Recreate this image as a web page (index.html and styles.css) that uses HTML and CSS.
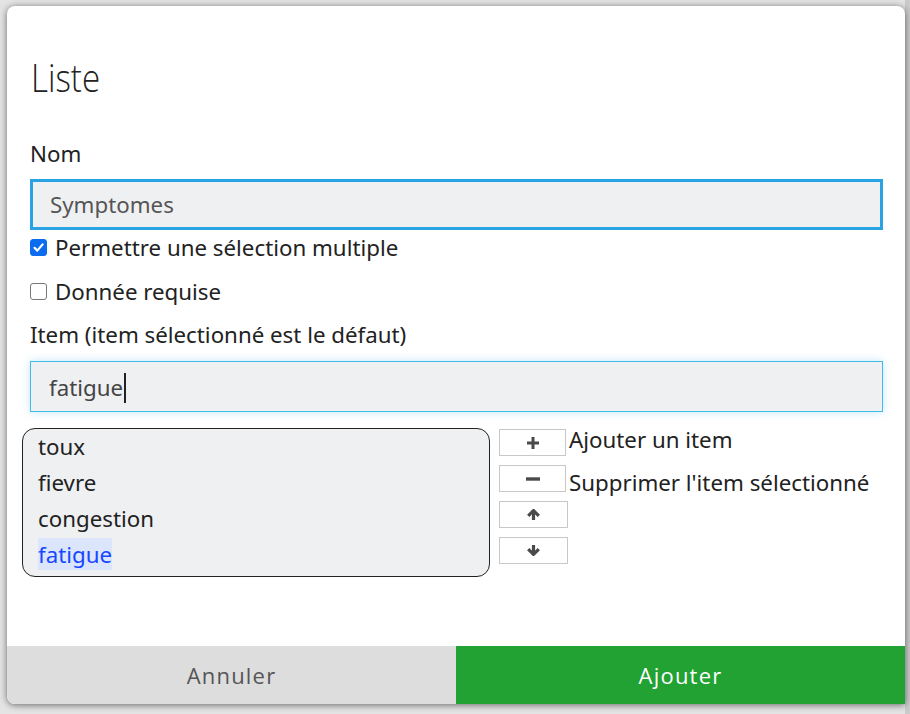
FILE: index.html
```html
<!DOCTYPE html>
<html lang="fr">
<head>
<meta charset="utf-8">
<title>Liste</title>
<link rel="stylesheet" href="styles.css">
</head>
<body>
<div class="modal">
  <div class="modal-body">
    <h1 class="title"><span class="title-text">Liste</span></h1>
    <div class="label">Nom</div>
    <div class="input input-focus">Symptomes</div>
    <div class="check check-first">
      <span class="box box-checked">
        <svg width="13" height="13" viewBox="0 0 13 13"><path d="M2.5 6.8 L5.3 9.6 L10.6 3.4" fill="none" stroke="#fff" stroke-width="2.2" stroke-linecap="round" stroke-linejoin="round"/></svg>
      </span>
      <span>Permettre une sélection multiple</span>
    </div>
    <div class="check">
      <span class="box"></span>
      <span>Donnée requise</span>
    </div>
    <div class="label label-item">Item (item sélectionné est le défaut)</div>
    <div class="input input-glow">fatigue<span class="caret"></span></div>
    <div class="items-row">
      <ul class="list">
        <li>toux</li>
        <li>fievre</li>
        <li>congestion</li>
        <li><span class="selected">fatigue</span></li>
      </ul>
      <div class="actions">
        <div class="action">
          <span class="btn">
            <svg width="12" height="12" viewBox="0 0 12 12"><path d="M6 0 V12 M0 6 H12" stroke="#4a4a4a" stroke-width="3"/></svg>
          </span>
          <span class="action-label label-add">Ajouter un item</span>
        </div>
        <div class="action">
          <span class="btn">
            <svg width="14" height="4" viewBox="0 0 14 4"><rect x="0" y="0.3" width="14" height="3.4" fill="#4a4a4a"/></svg>
          </span>
          <span class="action-label label-del">Supprimer l'item sélectionné</span>
        </div>
        <div class="action">
          <span class="btn btn-wide">
            <svg width="13" height="11" viewBox="0 0 13 11"><path d="M1.2 6.8 L6.5 1.6 L11.8 6.8" fill="none" stroke="#4a4a4a" stroke-width="3.2" stroke-linejoin="miter"/><path d="M6.5 2.5 V11" stroke="#4a4a4a" stroke-width="3.2"/></svg>
          </span>
        </div>
        <div class="action">
          <span class="btn btn-wide">
            <svg width="13" height="11" viewBox="0 0 13 11"><path d="M1.2 4.2 L6.5 9.4 L11.8 4.2" fill="none" stroke="#4a4a4a" stroke-width="3.2" stroke-linejoin="miter"/><path d="M6.5 8.5 V0" stroke="#4a4a4a" stroke-width="3.2"/></svg>
          </span>
        </div>
      </div>
    </div>
  </div>
  <div class="footer">
    <button class="footer-btn btn-cancel" type="button">Annuler</button>
    <button class="footer-btn btn-ok" type="button">Ajouter</button>
  </div>
</div>
</body>
</html>
```
FILE: styles.css
```css
html, body {
  margin: 0;
  padding: 0;
}
body {
  width: 910px;
  height: 714px;
  overflow: hidden;
  background: linear-gradient(90deg, #e4e4e4 905px, #cbcbcb 905px);
  font-family: "Noto Sans", "Open Sans", "Liberation Sans", sans-serif;
  color: #222;
}
.modal {
  margin: 6px 0 0 7px;
  width: 898px;
  height: 698px;
  background: #fff;
  border-radius: 8px 8px 0 8px;
  overflow: hidden;
  box-shadow: 0 1px 7px rgba(0, 0, 0, 0.55);
  display: flex;
  flex-direction: column;
}
.modal-body {
  flex: 1;
  padding: 48px 22px 0 23px;
}
.title {
  margin: 0;
  font-family: "Open Sans", "Noto Sans", sans-serif;
  font-weight: 300;
  font-size: 38px;
  line-height: 46px;
  color: #222;
  padding-left: 1px;
}
.title-text {
  display: inline-block;
  transform: scaleX(0.87);
  transform-origin: left center;
}
.label {
  margin-top: 36px;
  font-size: 22.3px;
  line-height: 36px;
}
.label-item {
  margin-top: 8px;
}
.input {
  box-sizing: border-box;
  height: 51px;
  background: #eff0f2;
  font-size: 22.3px;
  display: flex;
  align-items: center;
}
.input-focus {
  margin-top: 7px;
  border: 3px solid #29a3e3;
  padding-left: 17px;
  color: #555;
}
.input-glow {
  margin-top: 8px;
  border: 1px solid #3dbde9;
  padding: 2px 0 0 18px;
  color: #444;
  box-shadow: 0 0 8px rgba(80, 180, 240, 0.35);
}
.caret {
  display: inline-block;
  width: 2px;
  height: 30px;
  background: #222;
  margin-left: 1px;
}
.check {
  display: flex;
  align-items: center;
  height: 36px;
  margin-top: 8px;
  font-size: 22.3px;
  gap: 8px;
}
.check-first {
  margin-top: -1px;
}
.box {
  box-sizing: border-box;
  width: 17px;
  height: 17px;
  border: 1px solid #777;
  border-radius: 3px;
  background: #fff;
  display: flex;
  align-items: center;
  justify-content: center;
  margin-top: 1px;
}
.box-checked {
  background: #0b6cf0;
  border-color: #0b6cf0;
}
.items-row {
  display: flex;
  align-items: flex-start;
  margin: 16px 0 0 -8px;
  gap: 9px;
}
.list {
  box-sizing: border-box;
  width: 468px;
  height: 149px;
  margin: 0;
  padding: 0 0 0 15px;
  list-style: none;
  background: #eff0f2;
  border: 1px solid #222;
  border-radius: 13px;
  font-size: 22.3px;
  line-height: 36px;
}
.selected {
  background: #dbe5fb;
  color: #1747ff;
  padding: 1px 0 0;
}
.actions {
  display: flex;
  flex-direction: column;
  gap: 9px;
  padding-top: 1px;
}
.action {
  display: flex;
  height: 27px;
  gap: 3px;
}
.btn {
  box-sizing: border-box;
  width: 67px;
  height: 27px;
  border: 1px solid #c8c8c8;
  background: #fff;
  display: flex;
  align-items: center;
  justify-content: center;
}
.btn-wide {
  width: 69px;
}
.action-label {
  font-size: 22.3px;
  line-height: 27px;
  white-space: nowrap;
}
.label-add {
  margin-top: -3px;
}
.label-del {
  margin-top: 4px;
}
.footer {
  display: flex;
  height: 58px;
}
.footer-btn {
  flex: 1;
  border: none;
  margin: 0;
  padding: 0;
  font-family: "Open Sans", "Noto Sans", sans-serif;
  font-weight: 400;
  font-size: 22px;
  letter-spacing: 1.2px;
  line-height: 58px;
}
.btn-cancel {
  background: #dddddd;
  color: #555;
}
.btn-ok {
  background: #21a232;
  color: #fff;
}
```
